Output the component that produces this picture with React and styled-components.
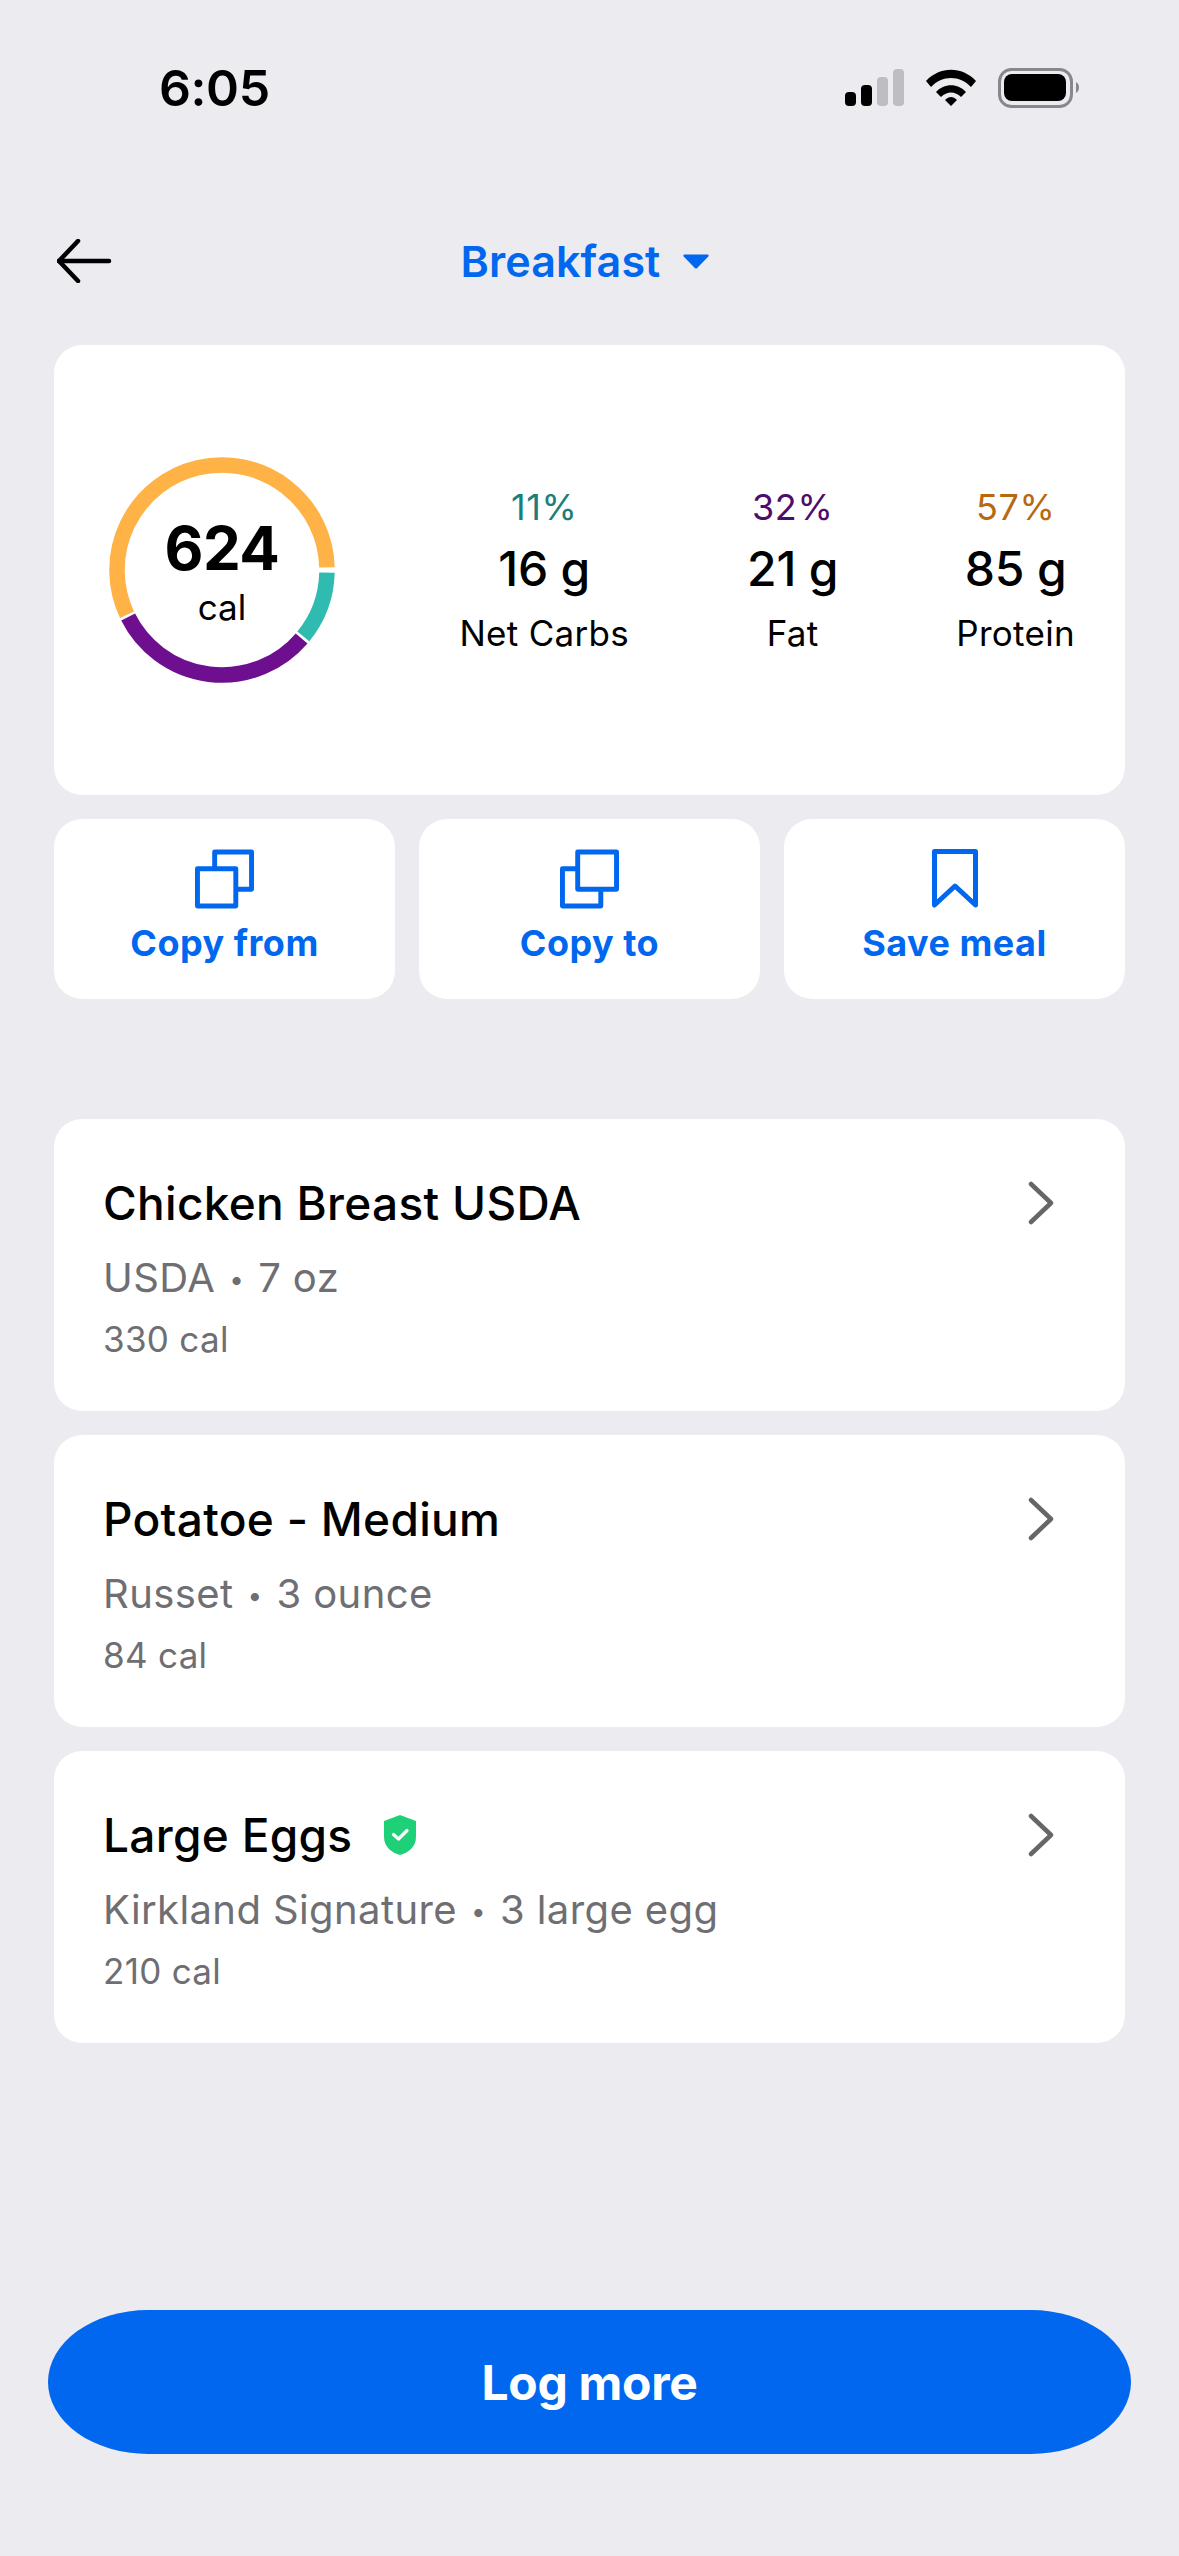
import React from "react";
import styled, { createGlobalStyle } from "styled-components";

const BLUE = "#0067EE";

const GlobalStyle = createGlobalStyle`
  html, body {
    margin: 0;
    padding: 0;
    background: #ebebf0;
  }
  * {
    box-sizing: border-box;
  }
  body {
    font-family: Inter, "Liberation Sans", sans-serif;
    -webkit-font-smoothing: antialiased;
  }
`;

const Page = styled.div`
  width: 1179px;
  height: 2556px;
  background: #ebebf0;
  display: flex;
  flex-direction: column;
  overflow: hidden;
`;

const StatusBar = styled.div`
  display: flex;
  align-items: center;
  justify-content: space-between;
  height: 40px;
  margin-top: 68px;
  padding: 0 98px 0 159px;
`;

const Time = styled.span`
  font-size: 50px;
  font-weight: 600;
  color: #000;
  letter-spacing: -0.4px;
  line-height: 40px;
`;

const Nav = styled.div`
  display: grid;
  grid-template-columns: 1fr auto 1fr;
  align-items: center;
  height: 60px;
  margin-top: 123px;
  padding: 0 66px 0 57px;
`;

const NavTitle = styled.div`
  display: flex;
  align-items: center;
  gap: 23px;
  color: ${BLUE};
  font-size: 43px;
  font-weight: 600;
  letter-spacing: 0.1px;
`;

const Content = styled.div`
  display: flex;
  flex-direction: column;
  margin-top: 54px;
  padding: 0 54px;
`;

const Card = styled.div`
  background: #fff;
  border-radius: 28px;
`;

const SummaryCard = styled(Card)`
  height: 450px;
  display: flex;
  align-items: center;
  justify-content: space-between;
  padding: 0 50px 0 55px;
`;

const RingWrap = styled.div`
  display: grid;
  width: 226px;
  height: 226px;
  place-items: center;
  & > * {
    grid-area: 1 / 1;
  }
`;

const RingText = styled.div`
  display: flex;
  flex-direction: column;
  align-items: center;
  padding-top: 4px;
`;

const RingValue = styled.div`
  font-size: 60px;
  font-weight: 700;
  line-height: 62px;
  color: #000;
  letter-spacing: -0.5px;
`;

const RingUnit = styled.div`
  font-size: 35px;
  line-height: 40px;
  margin-top: 8px;
  color: #000;
`;

const Macros = styled.div`
  display: flex;
  gap: 118px;
`;

const Macro = styled.div`
  display: flex;
  flex-direction: column;
  align-items: center;
`;

const MacroPct = styled.div`
  font-size: 36px;
  line-height: 42px;
  color: ${(p) => p.$color};
  letter-spacing: 0.6px;
`;

const MacroValue = styled.div`
  font-size: 48px;
  line-height: 56px;
  margin-top: 13px;
  color: #000;
  font-weight: 500;
  letter-spacing: -0.2px;
  white-space: nowrap;
`;

const MacroLabel = styled.div`
  font-size: 35px;
  line-height: 42px;
  margin-top: 15px;
  color: #000;
  letter-spacing: 0.3px;
  white-space: nowrap;
`;

const Actions = styled.div`
  display: grid;
  grid-template-columns: repeat(3, 1fr);
  gap: 24px;
  margin-top: 24px;
`;

const ActionCard = styled(Card)`
  height: 180px;
  display: flex;
  flex-direction: column;
  align-items: center;
  padding-top: 30px;
  color: ${BLUE};
`;

const ActionLabel = styled.div`
  font-size: 36px;
  font-weight: 700;
  line-height: 44px;
  margin-top: 12px;
  letter-spacing: 0.5px;
`;

const FoodList = styled.div`
  display: flex;
  flex-direction: column;
  gap: 24px;
  margin-top: 120px;
`;

const FoodCard = styled(Card)`
  height: 292px;
  padding: 56px 71px 0 49px;
`;

const FoodHead = styled.div`
  display: flex;
  align-items: center;
  justify-content: space-between;
  height: 56px;
`;

const FoodName = styled.div`
  display: flex;
  align-items: center;
  gap: 32px;
  font-size: 46px;
  font-weight: 500;
  color: #000;
  letter-spacing: 0.3px;
`;

const FoodMeta = styled.div`
  font-size: 40px;
  line-height: 54px;
  margin-top: 20px;
  color: #6e6e73;
  letter-spacing: 0.4px;
`;

const Dot = styled.span`
  font-size: 26px;
  margin: 0 14px;
  vertical-align: 3px;
`;

const FoodCal = styled.div`
  font-size: 35px;
  line-height: 44px;
  margin-top: 10px;
  color: #6e6e73;
  letter-spacing: 0.3px;
`;

const Footer = styled.div`
  margin-top: auto;
  padding: 0 48px 102px;
`;

const LogButton = styled.button`
  display: block;
  width: 100%;
  height: 144px;
  border: 0;
  background: ${BLUE};
  border-radius: 100px / 72px;
  color: #fff;
  font-family: inherit;
  font-size: 48px;
  font-weight: 700;
  letter-spacing: -0.3px;
`;

function StatusIcons() {
  return (
    <svg width="236" height="40" viewBox="846 68 236 40">
      <rect x="846" y="92" width="11" height="14" rx="4" fill="#000" />
      <rect x="862" y="85" width="11" height="21" rx="4" fill="#000" />
      <rect x="878" y="77" width="11" height="29" rx="4" fill="#bdbdc2" />
      <rect x="894" y="69" width="11" height="37" rx="4" fill="#bdbdc2" />
      <path d="M927 81 C941 66 963 66 977 81 L972 87 C961 75 943 75 932 87 Z" fill="#000" />
      <path d="M937 92 C945 83 959 83 967 92 L962 97 C956 91 948 91 942 97 Z" fill="#000" />
      <path d="M946 100 C950 96 954 96 958 100 L952 106 Z" fill="#000" />
      <rect x="1000.5" y="69.5" width="72" height="37" rx="12" fill="none" stroke="#88888c" strokeWidth="3" />
      <rect x="1005" y="74" width="62" height="27" rx="8" fill="#000" />
      <path d="M1077 82 C1081 84 1081 91 1077 93 Z" fill="#88888c" />
    </svg>
  );
}

function BackArrow() {
  return (
    <svg width="56" height="44" viewBox="0 0 56 44" fill="none" stroke="#000" strokeWidth="4.5" strokeLinecap="round" strokeLinejoin="round">
      <path d="M2 22 H52" />
      <path d="M21 2 L2 22 L21 42" />
    </svg>
  );
}

function Caret() {
  return (
    <svg width="26" height="15" viewBox="0 0 26 15">
      <path d="M1.5 0.5 H24.5 C25.5 0.5 26 1.6 25.3 2.4 L14.2 14 C13.5 14.7 12.5 14.7 11.8 14 L0.7 2.4 C0 1.6 0.5 0.5 1.5 0.5 Z" fill={BLUE} />
    </svg>
  );
}

// arc from fraction a to fraction b, clockwise from 3 o'clock
function arcPath(a, b) {
  const r = 105;
  const pt = (f) => {
    const t = f * 2 * Math.PI;
    return `${113 + r * Math.cos(t)} ${113 + r * Math.sin(t)}`;
  };
  return `M${pt(a)} A${r} ${r} 0 ${b - a > 0.5 ? 1 : 0} 1 ${pt(b)}`;
}

function Ring() {
  return (
    <svg width="226" height="226" viewBox="0 0 226 226" fill="none" strokeWidth="15.5">
      <path d={arcPath(0.004, 0.109)} stroke="#2FBBB0" />
      <path d={arcPath(0.113, 0.426)} stroke="#6D0F8E" />
      <path d={arcPath(0.43, 0.996)} stroke="#FFB245" />
    </svg>
  );
}

function CopyFromIcon() {
  return (
    <svg width="59" height="60" viewBox="0 0 60 60" fill="none" stroke={BLUE} strokeWidth="5" strokeLinejoin="round">
      <path d="M20 19.5 V2.5 H57.5 V40.5 H42" />
      <rect x="2.5" y="19.5" width="39" height="38" />
    </svg>
  );
}

function CopyToIcon() {
  return (
    <svg width="59" height="60" viewBox="0 0 60 60" fill="none" stroke={BLUE} strokeWidth="5" strokeLinejoin="round">
      <path d="M18 19.5 H2.5 V57.5 H41.5 V42" />
      <rect x="18" y="2.5" width="39.5" height="38" />
    </svg>
  );
}

function BookmarkIcon() {
  return (
    <svg width="46" height="60" viewBox="0 0 46 60" fill="none" stroke={BLUE} strokeWidth="5" strokeLinejoin="round">
      <path d="M2.5 2.5 H43.5 V56 L23 37 L2.5 56 Z" />
    </svg>
  );
}

function Chevron() {
  return (
    <svg width="26" height="44" viewBox="0 0 26 44" fill="none" stroke="#666669" strokeWidth="4.5" strokeLinecap="round" strokeLinejoin="round">
      <path d="M3 3 L23 22 L3 41" />
    </svg>
  );
}

function Shield() {
  return (
    <svg width="32" height="40" viewBox="0 0 32 40">
      <path d="M16 0 L32 6 V22 C32 32 24 38 16 40 C8 38 0 32 0 22 V6 Z" fill="#1ED078" />
      <path d="M9.5 19.5 L14.5 24 L23 15.5" fill="none" stroke="#fff" strokeWidth="3.2" strokeLinecap="round" strokeLinejoin="round" />
    </svg>
  );
}

const macros = [
  { pct: "11%", value: "16 g", label: "Net Carbs", color: "#1A7F79" },
  { pct: "32%", value: "21 g", label: "Fat", color: "#4E0D6B" },
  { pct: "57%", value: "85 g", label: "Protein", color: "#B8690F" },
];

const foods = [
  { name: "Chicken Breast USDA", brand: "USDA", amount: "7 oz", cal: "330 cal" },
  { name: "Potatoe - Medium", brand: "Russet", amount: "3 ounce", cal: "84 cal" },
  { name: "Large Eggs", brand: "Kirkland Signature", amount: "3 large egg", cal: "210 cal", verified: true },
];

export default function App() {
  return (
    <Page>
      <GlobalStyle />
      <StatusBar>
        <Time>6:05</Time>
        <StatusIcons />
      </StatusBar>

      <Nav>
        <BackArrow />
        <NavTitle>
          Breakfast
          <Caret />
        </NavTitle>
      </Nav>

      <Content>
        <SummaryCard>
          <RingWrap>
            <Ring />
            <RingText>
              <RingValue>624</RingValue>
              <RingUnit>cal</RingUnit>
            </RingText>
          </RingWrap>
          <Macros>
            {macros.map((m) => (
              <Macro key={m.label}>
                <MacroPct $color={m.color}>{m.pct}</MacroPct>
                <MacroValue>{m.value}</MacroValue>
                <MacroLabel>{m.label}</MacroLabel>
              </Macro>
            ))}
          </Macros>
        </SummaryCard>

        <Actions>
          <ActionCard>
            <CopyFromIcon />
            <ActionLabel>Copy from</ActionLabel>
          </ActionCard>
          <ActionCard>
            <CopyToIcon />
            <ActionLabel>Copy to</ActionLabel>
          </ActionCard>
          <ActionCard>
            <BookmarkIcon />
            <ActionLabel>Save meal</ActionLabel>
          </ActionCard>
        </Actions>

        <FoodList>
          {foods.map((f) => (
            <FoodCard key={f.name}>
              <FoodHead>
                <FoodName>
                  {f.name}
                  {f.verified && <Shield />}
                </FoodName>
                <Chevron />
              </FoodHead>
              <FoodMeta>
                {f.brand}
                <Dot>•</Dot>
                {f.amount}
              </FoodMeta>
              <FoodCal>{f.cal}</FoodCal>
            </FoodCard>
          ))}
        </FoodList>
      </Content>

      <Footer>
        <LogButton>Log more</LogButton>
      </Footer>
    </Page>
  );
}
